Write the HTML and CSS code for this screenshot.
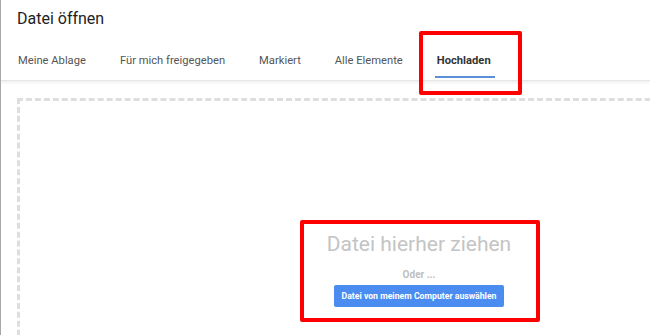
FILE: index.html
```html
<!DOCTYPE html>
<html lang="de">
<head>
    <meta charset="UTF-8">
    <title>Datei öffnen</title>
    <link rel="stylesheet" href="styles.css">
</head>
<body>
<div class="dialog">
    <div class="title">Datei öffnen</div>
    <ul class="tabs">
        <li>Meine Ablage</li>
        <li>Für mich freigegeben</li>
        <li>Markiert</li>
        <li>Alle Elemente</li>
        <li class="active">Hochladen</li>
    </ul>
    <div class="drop">
        <div class="drop-title">Datei hierher ziehen</div>
        <div class="drop-or">Oder ...</div>
        <button class="pick">Datei von meinem Computer auswählen</button>
    </div>

    <!-- rote Markierungen -->
    <div class="mark mark-tab"></div>
    <div class="mark mark-drop"></div>
</div>
</body>
</html>
```

FILE: styles.css
```css
* {
    margin: 0;
    padding: 0;
    box-sizing: border-box;
}
html, body {
    width: 650px;
    height: 335px;
    overflow: hidden;
    background: #fff;
}
body {
    font-family: Roboto, "Liberation Sans", Arial, sans-serif;
}
.dialog {
    position: relative;
    height: 335px;
    overflow: hidden;
    border-left: 1px solid #a8a8a8;
}
.title {
    padding: 9px 0 0 16px;
    height: 44px;
    font-size: 16px;
    color: #222;
}
.tabs {
    list-style: none;
    display: flex;
    height: 37px;
    padding-left: 0;
    border-bottom: 1px solid #e6e6e6;
    box-shadow: 0 2px 3px rgba(0, 0, 0, 0.06);
}
.tabs li {
    padding: 10px 17px 0;
    font-size: 11.2px;
    color: #555;
    cursor: pointer;
}
.tabs li.active {
    font-weight: bold;
    color: #333;
    position: relative;
}
.tabs li.active::after {
    content: "";
    position: absolute;
    left: 15px;
    right: 13px;
    bottom: 2px;
    height: 2px;
    background: #5b8fd6;
}
.drop {
    width: 804px;
    height: 300px;
    margin: 17px 0 0 16px;
    border: 3px dashed #dedede;
    text-align: center;
    padding-top: 131px;
}
.drop-title {
    font-size: 21px;
    color: #c4c4c4;
}
.drop-or {
    margin-top: 13px;
    font-size: 10px;
    font-weight: bold;
    color: #c0c0c0;
}
.pick {
    margin-top: 5px;
    width: 170px;
    height: 22px;
    padding: 0;
    border: 0;
    border-radius: 2px;
    background: #4a8cf0;
    color: #fff;
    font-family: inherit;
    font-size: 8.7px;
    font-weight: bold;
    cursor: pointer;
}
.mark {
    position: absolute;
    border: 4px solid #f00;
    border-radius: 2px;
}
.mark-tab {
    left: 418px;
    top: 31px;
    width: 103px;
    height: 64px;
}
.mark-drop {
    left: 299px;
    top: 220px;
    width: 240px;
    height: 102px;
}
```
